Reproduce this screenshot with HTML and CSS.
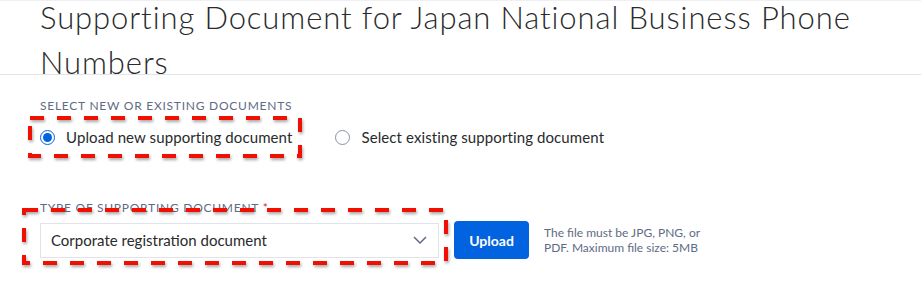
FILE: index.html
```html
<!DOCTYPE html>
<html lang="en">
<head>
  <meta charset="UTF-8">
  <meta name="viewport" content="width=device-width, initial-scale=1.0">
  <title>Supporting Document</title>
  <link rel="stylesheet" href="styles.css">
</head>
<body>
  <header class="page-head">
    <h1>Supporting Document for Japan National Business Phone Numbers</h1>
  </header>

  <main class="form">
    <div class="field">
      <div class="field-label">Select new or existing documents</div>
      <div class="radio-row">
        <label class="radio-option">
          <input type="radio" name="docSource" checked>
          <span>Upload new supporting document</span>
          <svg class="callout callout-radio" width="274" height="42">
            <rect x="2" y="2" width="270" height="38" />
          </svg>
        </label>
        <label class="radio-option">
          <input type="radio" name="docSource">
          <span>Select existing supporting document</span>
        </label>
      </div>
    </div>

    <div class="field field-type">
      <div class="field-label">Type of supporting document <span class="req">*</span></div>
      <div class="upload-row">
        <div class="select">
          <span>Corporate registration document</span>
          <svg width="14" height="8" viewBox="0 0 14 8"><path d="M1 1l6 6 6-6" fill="none" stroke="#606b85" stroke-width="1.5"/></svg>
        </div>
        <button class="btn-upload">Upload</button>
        <p class="help">The file must be JPG, PNG, or PDF. Maximum file size: 5MB</p>
        <svg class="callout callout-select" width="426" height="57">
          <rect x="2" y="2" width="422" height="53" />
        </svg>
      </div>
    </div>
  </main>
</body>
</html>
```

FILE: styles.css
```css
* {
  margin: 0;
  padding: 0;
  box-sizing: border-box;
}

html,
body {
  min-height: 100%;
}

body {
  font-family: 'Lato', 'Open Sans', sans-serif;
  color: #121c2d;
  background: #fff;
  border-top: 1px solid #eef0f3;
  padding-bottom: 30px;
}

.page-head {
  padding: 0 40px;
  height: 80px;
  border-bottom: 1px solid #e1e3ea;
}

.page-head h1 {
  font-size: 31px;
  font-weight: 300;
  letter-spacing: 0.9px;
  line-height: 45px;
  color: #282a2b;
  margin-top: -6px;
}

.form {
  padding: 23px 40px 0;
}

.field-label {
  font-size: 12px;
  letter-spacing: 0.75px;
  text-transform: uppercase;
  color: #606b85;
  line-height: 16px;
}

.req {
  color: #d61f1f;
}

.radio-row {
  display: flex;
  gap: 43px;
  margin-top: 8px;
  height: 30px;
  align-items: center;
}

.radio-option {
  display: flex;
  align-items: center;
  gap: 11px;
  font-size: 15px;
  letter-spacing: 0.1px;
  color: #282a2b;
  position: relative;
}

.radio-option input {
  -webkit-appearance: none;
  appearance: none;
  width: 15px;
  height: 15px;
  border: 1px solid #8891aa;
  border-radius: 50%;
  margin: 0;
  display: grid;
  place-items: center;
}

.radio-option input:checked {
  border-color: #0263e0;
}

.radio-option input:checked::before {
  content: "";
  width: 9px;
  height: 9px;
  border-radius: 50%;
  background: #0263e0;
}

.field-type {
  margin-top: 48px;
}

.upload-row {
  display: flex;
  align-items: center;
  margin-top: 5px;
  position: relative;
}

.select {
  width: 399px;
  height: 35px;
  border: 1px solid #e1e3ea;
  display: flex;
  align-items: center;
  justify-content: space-between;
  padding: 0 11px 0 10px;
  font-size: 15px;
  color: #282a2b;
}

.btn-upload {
  margin-left: 15px;
  width: 75px;
  height: 38px;
  border: none;
  border-radius: 4px;
  background: #0263e0;
  color: #fff;
  font-family: inherit;
  font-size: 14px;
  font-weight: 700;
}

.help {
  margin-left: 15px;
  width: 170px;
  font-size: 12px;
  line-height: 15px;
  color: #606b85;
}

/* red dashed callouts drawn over the form */
.callout {
  position: absolute;
  overflow: visible;
  pointer-events: none;
  filter: drop-shadow(1px 2px 1.5px rgba(0, 0, 0, 0.35));
}

.callout rect {
  fill: none;
  stroke: #f00f00;
  stroke-width: 4;
  stroke-dasharray: 14 13;
}

.callout-radio {
  top: -12px;
  left: -12px;
}

.callout-select {
  top: -13px;
  left: -18px;
}
```
